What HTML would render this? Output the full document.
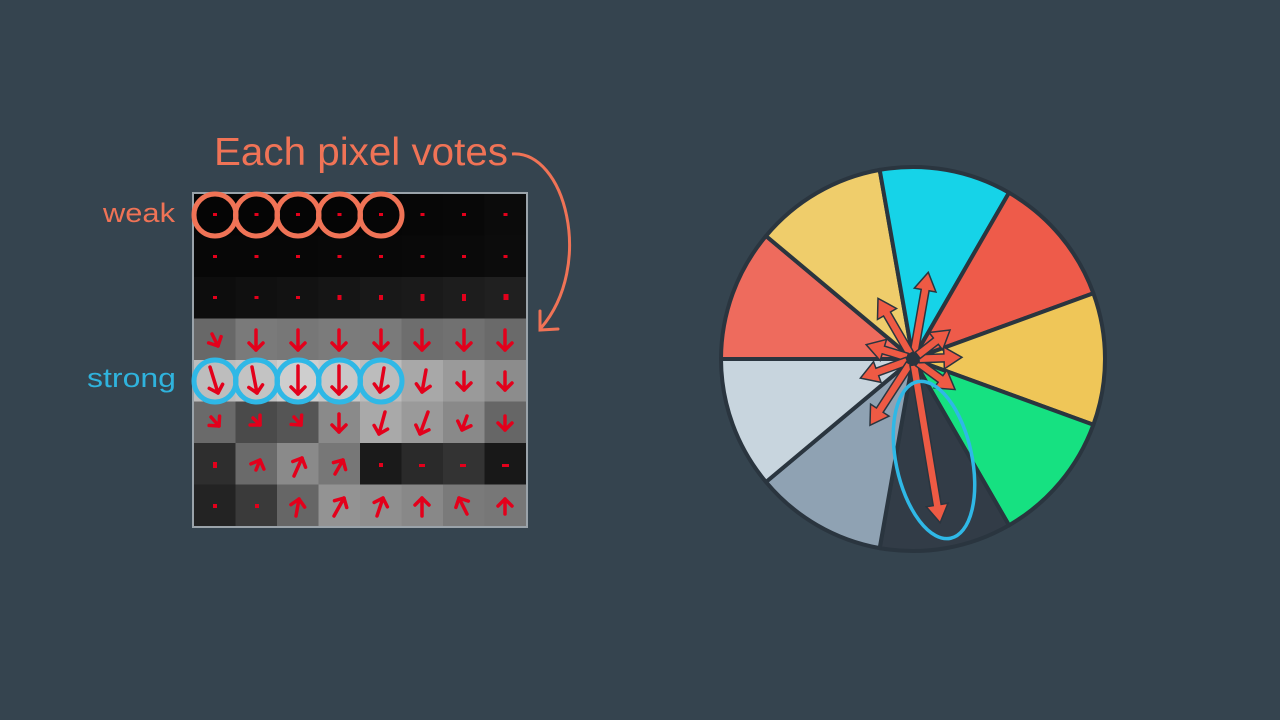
<!DOCTYPE html>
<html><head><meta charset="utf-8"><style>
html,body{margin:0;padding:0;background:#35444f;}
svg{display:block}
text{font-family:"Liberation Sans",sans-serif}
</style></head><body>
<svg width="1280" height="720" viewBox="0 0 1280 720" xmlns="http://www.w3.org/2000/svg">
<defs>
<marker id="ah" markerUnits="userSpaceOnUse" markerWidth="18" markerHeight="18" refX="9" refY="9" orient="auto">
<path d="M2,2 L9,9 L2,16" fill="none" stroke="#e3001b" stroke-width="3.5" stroke-linecap="round" stroke-linejoin="round"/>
</marker>
</defs>
<rect width="1280" height="720" fill="#35444f"/>
<text x="214" y="165" font-size="39" fill="#f07356" textLength="294" lengthAdjust="spacingAndGlyphs">Each pixel votes</text>
<text x="103" y="222" font-size="27" fill="#f07356" textLength="72" lengthAdjust="spacingAndGlyphs">weak</text>
<text x="87" y="387" font-size="27" fill="#2fb3dd" textLength="89" lengthAdjust="spacingAndGlyphs">strong</text>
<path d="M512,154 C565,150 595,265 541,328" fill="none" stroke="#f07356" stroke-width="3"/>
<path d="M540,311 L540,330 L558,329" fill="none" stroke="#f07356" stroke-width="3" stroke-linecap="round"/>

<g transform="translate(194,194)">
<rect x="-2" y="-2" width="336" height="336" fill="#9aa3aa"/>
<g>
<rect x="0" y="0" width="42" height="42" fill="#050505"/><rect x="41.5" y="0" width="42" height="42" fill="#050505"/><rect x="83" y="0" width="42" height="42" fill="#050505"/><rect x="124.5" y="0" width="42" height="42" fill="#050505"/><rect x="166" y="0" width="42" height="42" fill="#060606"/><rect x="207.5" y="0" width="42" height="42" fill="#070707"/><rect x="249" y="0" width="42" height="42" fill="#080808"/><rect x="290.5" y="0" width="41.5" height="42" fill="#0b0b0b"/>
<rect x="0" y="41.5" width="42" height="42" fill="#070707"/><rect x="41.5" y="41.5" width="42" height="42" fill="#070707"/><rect x="83" y="41.5" width="42" height="42" fill="#070707"/><rect x="124.5" y="41.5" width="42" height="42" fill="#080808"/><rect x="166" y="41.5" width="42" height="42" fill="#080808"/><rect x="207.5" y="41.5" width="42" height="42" fill="#090909"/><rect x="249" y="41.5" width="42" height="42" fill="#0a0a0a"/><rect x="290.5" y="41.5" width="41.5" height="42" fill="#0c0c0c"/>
<rect x="0" y="83" width="42" height="42" fill="#0d0d0d"/><rect x="41.5" y="83" width="42" height="42" fill="#101010"/><rect x="83" y="83" width="42" height="42" fill="#121212"/><rect x="124.5" y="83" width="42" height="42" fill="#151515"/><rect x="166" y="83" width="42" height="42" fill="#181818"/><rect x="207.5" y="83" width="42" height="42" fill="#1a1a1a"/><rect x="249" y="83" width="42" height="42" fill="#1d1d1d"/><rect x="290.5" y="83" width="41.5" height="42" fill="#202020"/>
<rect x="0" y="124.5" width="42" height="42" fill="#686868"/><rect x="41.5" y="124.5" width="42" height="42" fill="#7a7a7a"/><rect x="83" y="124.5" width="42" height="42" fill="#777"/><rect x="124.5" y="124.5" width="42" height="42" fill="#7b7b7b"/><rect x="166" y="124.5" width="42" height="42" fill="#7a7a7a"/><rect x="207.5" y="124.5" width="42" height="42" fill="#6e6e6e"/><rect x="249" y="124.5" width="42" height="42" fill="#717171"/><rect x="290.5" y="124.5" width="41.5" height="42" fill="#6a6a6a"/>
<rect x="0" y="166" width="42" height="42" fill="#bdbdbd"/><rect x="41.5" y="166" width="42" height="42" fill="#c3c3c3"/><rect x="83" y="166" width="42" height="42" fill="#cecece"/><rect x="124.5" y="166" width="42" height="42" fill="#c8c8c8"/><rect x="166" y="166" width="42" height="42" fill="#bcbcbc"/><rect x="207.5" y="166" width="42" height="42" fill="#a8a8a8"/><rect x="249" y="166" width="42" height="42" fill="#9a9a9a"/><rect x="290.5" y="166" width="41.5" height="42" fill="#8c8c8c"/>
<rect x="0" y="207.5" width="42" height="42" fill="#6a6a6a"/><rect x="41.5" y="207.5" width="42" height="42" fill="#4a4a4a"/><rect x="83" y="207.5" width="42" height="42" fill="#555"/><rect x="124.5" y="207.5" width="42" height="42" fill="#8a8a8a"/><rect x="166" y="207.5" width="42" height="42" fill="#a9a9a9"/><rect x="207.5" y="207.5" width="42" height="42" fill="#9a9a9a"/><rect x="249" y="207.5" width="42" height="42" fill="#898989"/><rect x="290.5" y="207.5" width="41.5" height="42" fill="#666"/>
<rect x="0" y="249" width="42" height="42" fill="#2e2e2e"/><rect x="41.5" y="249" width="42" height="42" fill="#6a6a6a"/><rect x="83" y="249" width="42" height="42" fill="#8a8a8a"/><rect x="124.5" y="249" width="42" height="42" fill="#777"/><rect x="166" y="249" width="42" height="42" fill="#1a1a1a"/><rect x="207.5" y="249" width="42" height="42" fill="#2a2a2a"/><rect x="249" y="249" width="42" height="42" fill="#333"/><rect x="290.5" y="249" width="41.5" height="42" fill="#181818"/>
<rect x="0" y="290.5" width="42" height="41.5" fill="#232323"/><rect x="41.5" y="290.5" width="42" height="41.5" fill="#3a3a3a"/><rect x="83" y="290.5" width="42" height="41.5" fill="#666"/><rect x="124.5" y="290.5" width="42" height="41.5" fill="#939393"/><rect x="166" y="290.5" width="42" height="41.5" fill="#8f8f8f"/><rect x="207.5" y="290.5" width="42" height="41.5" fill="#888"/><rect x="249" y="290.5" width="42" height="41.5" fill="#7a7a7a"/><rect x="290.5" y="290.5" width="41.5" height="41.5" fill="#777"/>
</g>
<g fill="#e3001b">
<rect x="19" y="19" width="4" height="3"/><rect x="60.5" y="19" width="4" height="3"/><rect x="102" y="19" width="4" height="3"/><rect x="143.5" y="19" width="4" height="3"/><rect x="185" y="19" width="4" height="3"/><rect x="226.5" y="19" width="4" height="3"/><rect x="268" y="19" width="4" height="3"/><rect x="309.5" y="19" width="4" height="3"/>
<rect x="19" y="61" width="4" height="3"/><rect x="60.5" y="61" width="4" height="3"/><rect x="102" y="61" width="4" height="3"/><rect x="143.5" y="61" width="4" height="3"/><rect x="185" y="61" width="4" height="3"/><rect x="226.5" y="61" width="4" height="3"/><rect x="268" y="61" width="4" height="3"/><rect x="309.5" y="61" width="4" height="3"/>
<rect x="19" y="102" width="4" height="3"/><rect x="60.5" y="102" width="4" height="3"/><rect x="102" y="102" width="4" height="3"/><rect x="143.5" y="101" width="4" height="5"/><rect x="185" y="101" width="4" height="5"/><rect x="226.5" y="100" width="4" height="7"/><rect x="268" y="100" width="4" height="7"/><rect x="309.5" y="100" width="5" height="6"/>
<rect x="19" y="268" width="4" height="6"/><rect x="185" y="269" width="4" height="4"/><rect x="225" y="270" width="6" height="3"/><rect x="266" y="270" width="6" height="3"/><rect x="308" y="270" width="7" height="3"/>
<rect x="19" y="310" width="4" height="4"/><rect x="61" y="310" width="4" height="4"/>
</g>
<g stroke="#e3001b" stroke-width="3.5" stroke-linecap="round" marker-end="url(#ah)" fill="none">
<line x1="18" y1="140" x2="24" y2="152"/>
<line x1="62" y1="136" x2="62" y2="156"/><line x1="104" y1="136" x2="104" y2="156"/><line x1="145" y1="136" x2="145" y2="156"/><line x1="187" y1="136" x2="187" y2="156"/><line x1="228" y1="136" x2="228" y2="156"/><line x1="270" y1="136" x2="270" y2="156"/><line x1="311" y1="136" x2="311" y2="156"/>
<line x1="16" y1="173" x2="24" y2="199"/><line x1="58" y1="173" x2="63" y2="199"/><line x1="104" y1="172" x2="104" y2="200"/><line x1="145" y1="172" x2="145" y2="200"/><line x1="190" y1="174" x2="186" y2="198"/><line x1="232" y1="176" x2="228" y2="198"/><line x1="270" y1="178" x2="270" y2="196"/><line x1="311" y1="178" x2="311" y2="196"/>
<line x1="17" y1="223" x2="25" y2="232"/><line x1="59" y1="224" x2="66" y2="231"/><line x1="100" y1="223" x2="107" y2="231"/><line x1="145" y1="220" x2="145" y2="238"/><line x1="191" y1="218" x2="185" y2="240"/><line x1="234" y1="218" x2="226" y2="240"/><line x1="273" y1="222" x2="268" y2="236"/><line x1="311" y1="222" x2="311" y2="236"/>
<line x1="62" y1="276" x2="66" y2="266"/><line x1="100" y1="282" x2="108" y2="264"/><line x1="141" y1="280" x2="149" y2="266"/>
<line x1="102" y1="322" x2="105" y2="305"/><line x1="140" y1="322" x2="150" y2="304"/><line x1="183" y1="322" x2="189" y2="304"/><line x1="228" y1="322" x2="228" y2="304"/><line x1="273" y1="320" x2="265" y2="304"/><line x1="311" y1="320" x2="311" y2="305"/>
</g>
<g fill="none" stroke="#f07356" stroke-width="5">
<circle cx="21" cy="21" r="21"/><circle cx="62.5" cy="21" r="21"/><circle cx="104" cy="21" r="21"/><circle cx="145.5" cy="21" r="21"/><circle cx="187" cy="21" r="21"/>
</g>
<g fill="none" stroke="#2fb8e6" stroke-width="5">
<circle cx="21" cy="187" r="21"/><circle cx="62.5" cy="187" r="21"/><circle cx="104" cy="187" r="21"/><circle cx="145.5" cy="187" r="21"/><circle cx="187" cy="187" r="21"/>
</g>
</g>

<g stroke="#2a353f" stroke-width="4" stroke-linejoin="round">
<path d="M913,359 L721,359 A192,192 0 0 1 766,236 Z" fill="#ee6b5d"/>
<path d="M913,359 L766,236 A192,192 0 0 1 879.7,169.9 Z" fill="#efcd6b"/>
<path d="M913,359 L879.7,169.9 A192,192 0 0 1 1009,192.7 Z" fill="#16d3e8"/>
<path d="M913,359 L1009,192.7 A192,192 0 0 1 1093.4,293.3 Z" fill="#ee5b4a"/>
<path d="M913,359 L1093.4,293.3 A192,192 0 0 1 1093.4,424.7 Z" fill="#efc658"/>
<path d="M913,359 L1093.4,424.7 A192,192 0 0 1 1009,525.3 Z" fill="#16e181"/>
<path d="M913,359 L1009,525.3 A192,192 0 0 1 879.7,548.1 Z" fill="#323c47"/>
<path d="M913,359 L879.7,548.1 A192,192 0 0 1 766,482 Z" fill="#8fa2b3"/>
<path d="M913,359 L766,482 A192,192 0 0 1 721,359 Z" fill="#c8d5de"/>
</g>
<g fill="#ee5a44" stroke="#2a353f" stroke-width="1.5" stroke-linejoin="miter">
<path transform="translate(913,359) rotate(-80)" d="M6,-4 L70,-4 L70,-11 L88,0 L70,11 L70,4 L6,4 Z"/>
<path transform="translate(913,359) rotate(-120)" d="M6,-4 L52,-4 L52,-11 L70,0 L52,11 L52,4 L6,4 Z"/>
<path transform="translate(913,359) rotate(-163)" d="M6,-4 L31,-4 L31,-11 L49,0 L31,11 L31,4 L6,4 Z"/>
<path transform="translate(913,359) rotate(160)" d="M6,-4 L38,-4 L38,-11 L56,0 L38,11 L38,4 L6,4 Z"/>
<path transform="translate(913,359) rotate(123)" d="M6,-4 L61,-4 L61,-11 L79,0 L61,11 L61,4 L6,4 Z"/>
<path transform="translate(913,359) rotate(80.6)" d="M6,-4 L148,-4 L148,-11 L166,0 L148,11 L148,4 L6,4 Z"/>
<path transform="translate(913,359) rotate(36)" d="M6,-4 L34,-4 L34,-11 L52,0 L34,11 L34,4 L6,4 Z"/>
<path transform="translate(913,359) rotate(-2)" d="M6,-4 L31,-4 L31,-11 L49,0 L31,11 L31,4 L6,4 Z"/>
<path transform="translate(913,359) rotate(-38)" d="M6,-4 L29,-4 L29,-11 L47,0 L29,11 L29,4 L6,4 Z"/>
</g>
<circle cx="913" cy="359" r="6" fill="#2a353f"/>
<ellipse cx="934" cy="460" rx="38" ry="80" transform="rotate(-12 934 460)" fill="none" stroke="#2fb8e6" stroke-width="3.5"/>
</svg>
</body></html>
